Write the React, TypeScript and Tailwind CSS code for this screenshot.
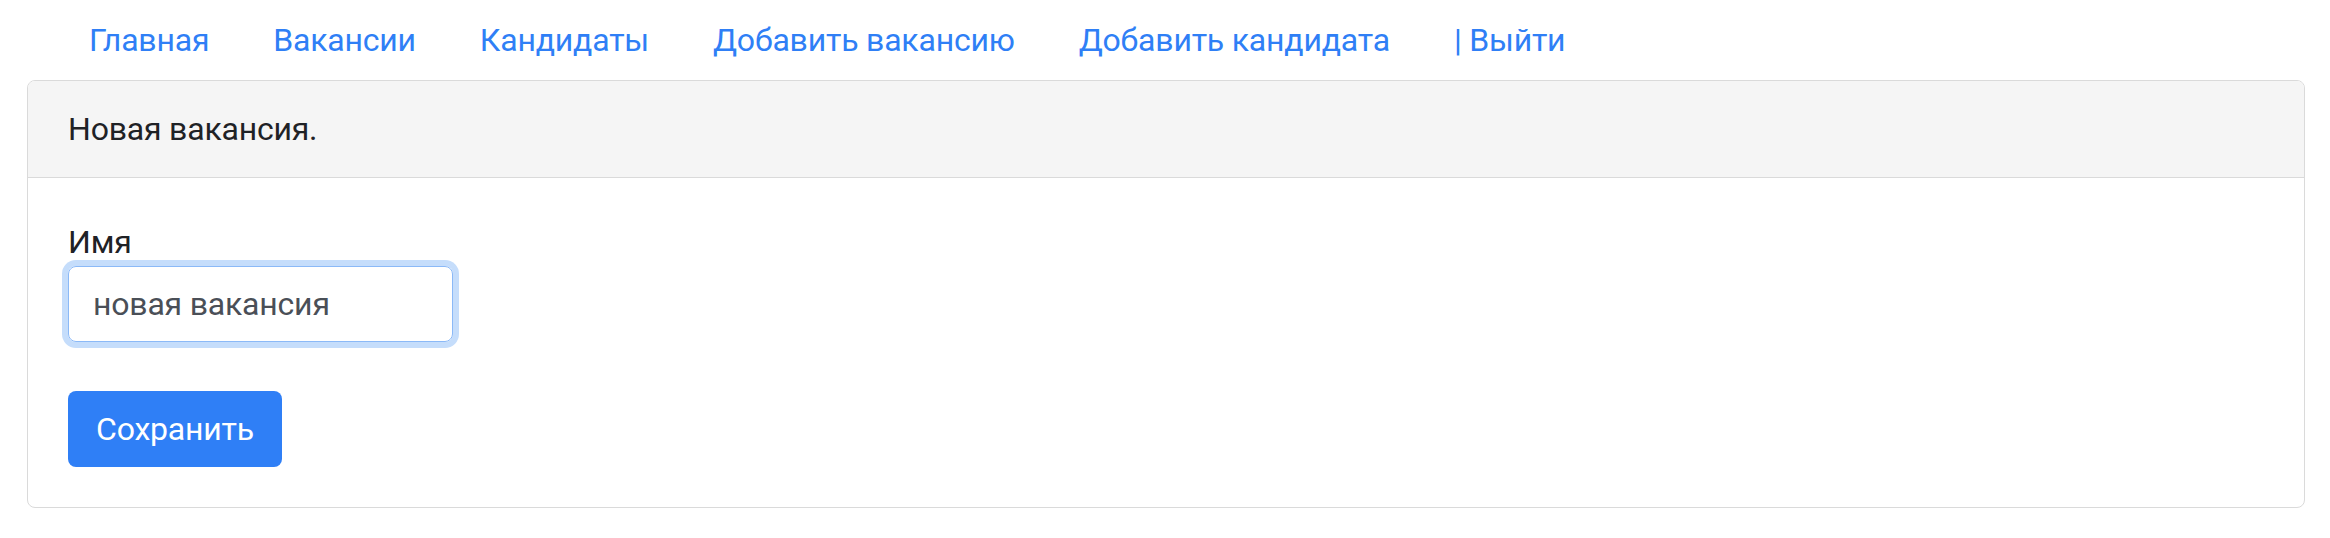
const links = [
  "Главная",
  "Вакансии",
  "Кандидаты",
  "Добавить вакансию",
  "Добавить кандидата",
  "| Выйти",
];

export default function App() {
  return (
    <div className="w-full h-[538px] bg-white font-['Roboto','Liberation_Sans',sans-serif] text-[32px] leading-[48px] tracking-[-0.2px] text-[#1f2226]">
      {/* Top nav */}
      <ul className="flex pl-[57px] h-[80px]">
        {links.map((item) => (
          <li key={item}>
            <a href="#" className="block px-8 py-4 text-[#2f7ff6]">
              {item}
            </a>
          </li>
        ))}
      </ul>

      {/* Card */}
      <div className="ml-[27px] w-[2278px] border border-[#dadada] rounded-lg overflow-hidden">
        <div className="h-[97px] px-10 py-6 bg-[#f5f5f5] border-b border-[#dadada]">
          Новая вакансия.
        </div>
        <div className="px-10 pt-10 pb-10">
          <form>
            <label className="block h-[48px]">Имя</label>
            <input
              type="text"
              defaultValue="новая вакансия"
              className="block w-[385px] h-[76px] px-6 border border-[#8bb9f7] rounded-lg text-[#4a4f57] tracking-[-0.2px] outline-none shadow-[0_0_0_6px_#c5ddfb]"
            />
            <button
              type="button"
              className="mt-[49px] w-[214px] h-[76px] rounded-lg bg-[#2f7ff6] text-white tracking-[-0.2px]"
            >
              Сохранить
            </button>
          </form>
        </div>
      </div>
    </div>
  );
}
